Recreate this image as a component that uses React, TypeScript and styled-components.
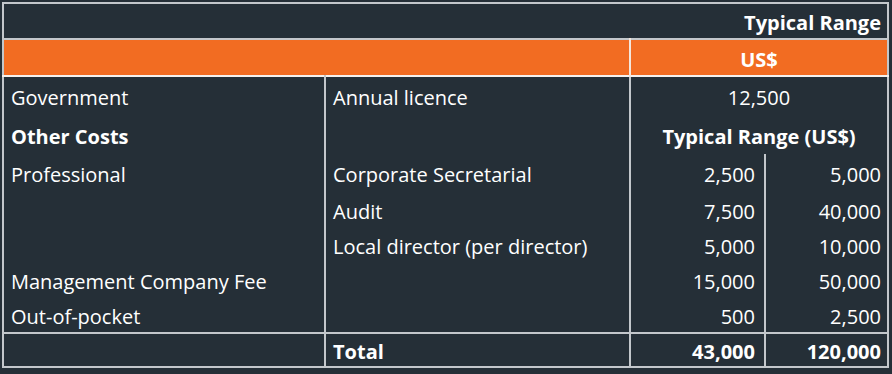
import { memo } from "react";
import styled, { createGlobalStyle } from "styled-components";

const COLOR_BG = "#252f37";
const COLOR_ORANGE = "#f26c22";
const COLOR_LINE = "#c3c7cb";
const COLOR_FONT = "#ffffff";

const GlobalStyle = createGlobalStyle`
  html, body {
    margin: 0;
    padding: 0;
    background-color: ${COLOR_BG};
  }
  body {
    font-family: "Open Sans", "Liberation Sans", sans-serif;
    color: ${COLOR_FONT};
  }
`;

const StyledPage = styled.div`
  padding: 2px 2px 2px 2px;
  width: 892px;
  height: 374px;
  box-sizing: border-box;
`;

const StyledTable = styled.table`
  border-collapse: collapse;
  border: 2px solid ${COLOR_LINE};
  width: 887px;
  table-layout: fixed;
  font-size: 20px;
`;

const StyledRow = styled.tr<{ $height: number; $topLine?: boolean }>`
  height: ${(p) => p.$height}px;
  border-top: ${(p) => (p.$topLine ? `2px solid ${COLOR_LINE}` : "0")};
`;

const StyledCell = styled.td<{
  $align?: "left" | "center" | "right";
  $bold?: boolean;
  $line?: "none" | "gray" | "white";
  $pad?: number;
}>`
  padding: 4px ${(p) => p.$pad ?? 7}px 0;
  text-align: ${(p) => p.$align ?? "left"};
  font-weight: ${(p) => (p.$bold ? 700 : 400)};
  border-left: ${(p) =>
    p.$line === "gray" ? `2px solid ${COLOR_LINE}` : p.$line === "white" ? "2px solid #f4e6dc" : "0"};
  white-space: nowrap;
  vertical-align: middle;
  line-height: 1;
`;

const StyledHeaderRow = styled.tr`
  height: 36px;
  border-bottom: 2px solid ${COLOR_LINE};
`;

const StyledOrangeRow = styled.tr`
  height: 37px;
  background-color: ${COLOR_ORANGE};
  border-bottom: 2px solid #f5f1ee;
`;

type Line = { label?: string; item?: string; low: string; high: string; height: number };

const LINES: Line[] = [
  { label: "Professional", item: "Corporate Secretarial", low: "2,500", high: "5,000", height: 38 },
  { item: "Audit", low: "7,500", high: "40,000", height: 35 },
  { item: "Local director (per director)", low: "5,000", high: "10,000", height: 35 },
  { label: "Management Company Fee", low: "15,000", high: "50,000", height: 36 },
  { label: "Out-of-pocket", low: "500", high: "2,500", height: 35 },
];

const App = memo(() => {
  return (
    <StyledPage>
      <GlobalStyle />
      <StyledTable>
        <colgroup>
          <col style={{ width: 322 }} />
          <col style={{ width: 305 }} />
          <col style={{ width: 135 }} />
          <col />
        </colgroup>
        <tbody>
          <StyledHeaderRow>
            <StyledCell colSpan={4} $align="right" $bold $pad={6}>
              Typical Range
            </StyledCell>
          </StyledHeaderRow>
          <StyledOrangeRow>
            <StyledCell colSpan={2} />
            <StyledCell colSpan={2} $align="center" $bold $line="white">
              US$
            </StyledCell>
          </StyledOrangeRow>
          <StyledRow $height={39}>
            <StyledCell>Government</StyledCell>
            <StyledCell $line="gray">Annual licence</StyledCell>
            <StyledCell colSpan={2} $align="center" $line="gray">
              12,500
            </StyledCell>
          </StyledRow>
          <StyledRow $height={39}>
            <StyledCell $bold>Other Costs</StyledCell>
            <StyledCell $line="gray" />
            <StyledCell colSpan={2} $align="center" $bold $line="gray">
              Typical Range (US$)
            </StyledCell>
          </StyledRow>
          {LINES.map((l, i) => (
            <StyledRow key={i} $height={l.height}>
              <StyledCell>{l.label}</StyledCell>
              <StyledCell $line="gray">{l.item}</StyledCell>
              <StyledCell $align="right" $line="gray" $pad={9}>
                {l.low}
              </StyledCell>
              <StyledCell $align="right" $line="gray" $pad={6}>
                {l.high}
              </StyledCell>
            </StyledRow>
          ))}
          <StyledRow $height={34} $topLine>
            <StyledCell />
            <StyledCell $bold $line="gray">
              Total
            </StyledCell>
            <StyledCell $align="right" $bold $line="gray" $pad={9}>
              43,000
            </StyledCell>
            <StyledCell $align="right" $bold $line="gray" $pad={6}>
              120,000
            </StyledCell>
          </StyledRow>
        </tbody>
      </StyledTable>
    </StyledPage>
  );
});

export default App;
